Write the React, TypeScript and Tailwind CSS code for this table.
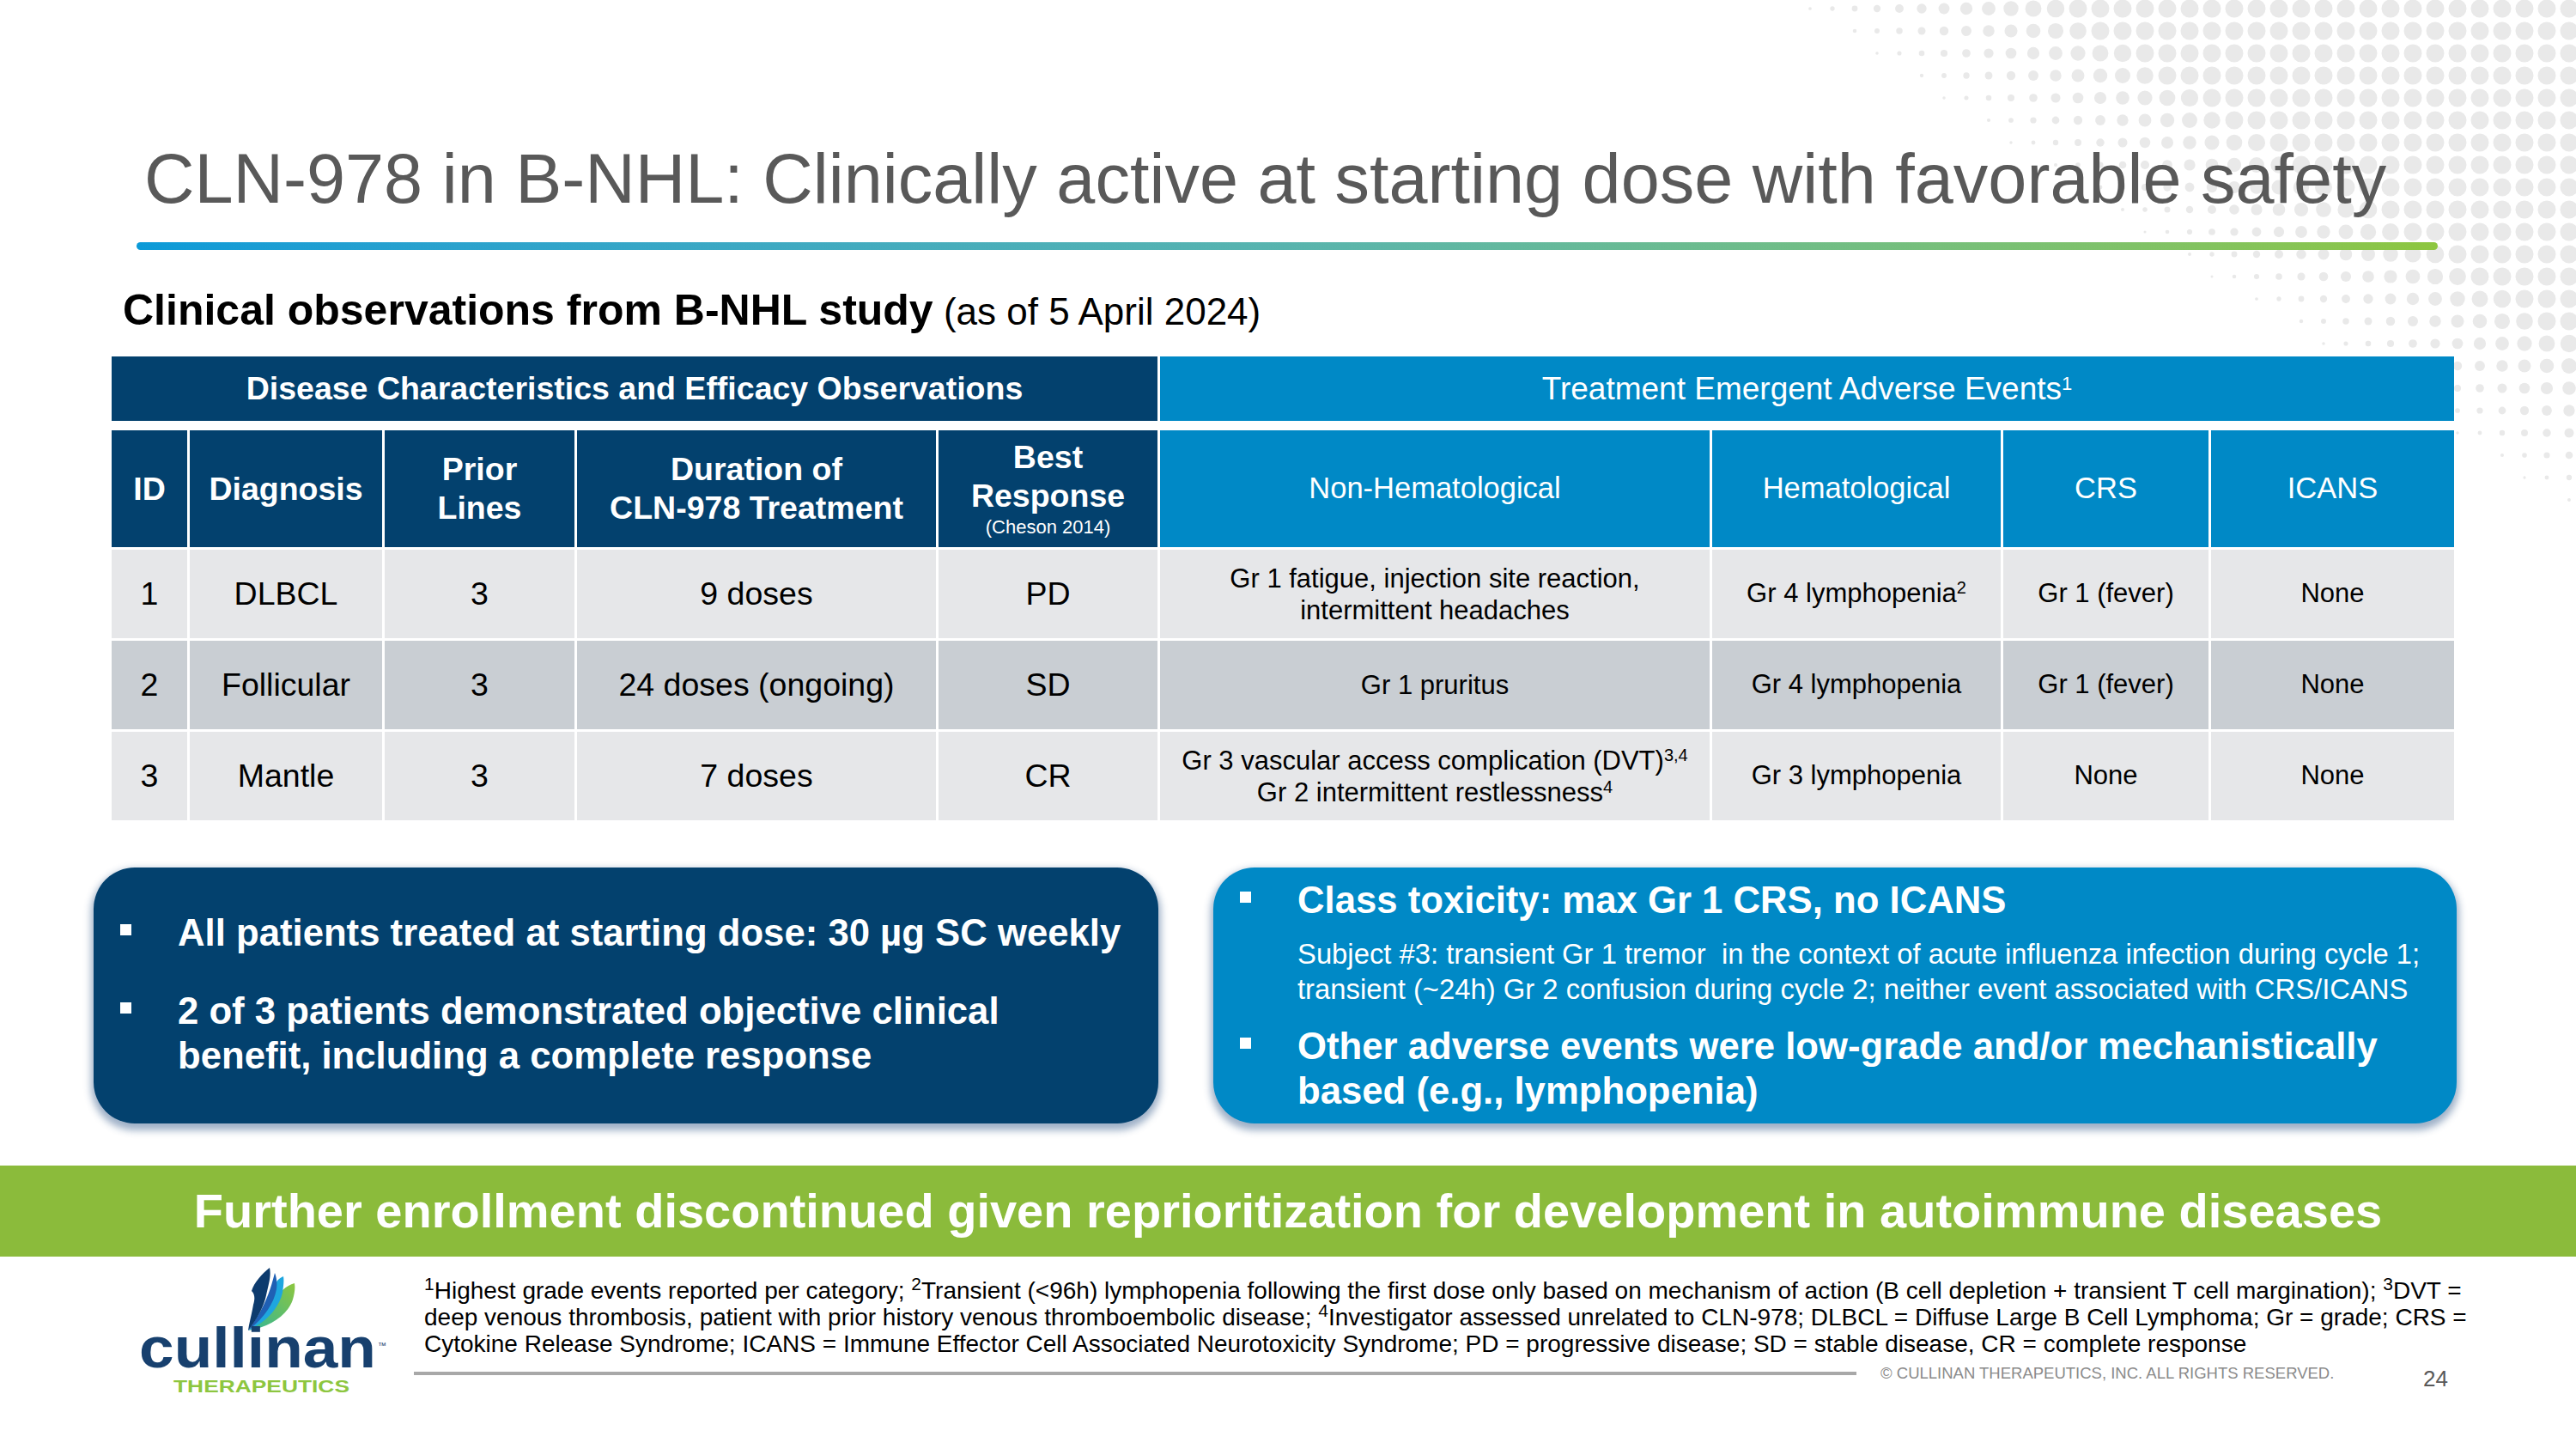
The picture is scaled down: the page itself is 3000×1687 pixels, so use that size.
import React from "react";

type Row = {
  id: string;
  diagnosis: string;
  lines: string;
  duration: string;
  response: string;
  nonHem: React.ReactNode;
  hem: React.ReactNode;
  crs: string;
  icans: string;
  bg: string;
};

const rows: Row[] = [
  {
    id: "1",
    diagnosis: "DLBCL",
    lines: "3",
    duration: "9 doses",
    response: "PD",
    nonHem: (
      <>
        Gr 1 fatigue, injection site reaction,
        <br />
        intermittent headaches
      </>
    ),
    hem: (
      <>
        Gr 4 lymphopenia<sup className="text-[20px]">2</sup>
      </>
    ),
    crs: "Gr 1 (fever)",
    icans: "None",
    bg: "bg-[#e6e7e9]",
  },
  {
    id: "2",
    diagnosis: "Follicular",
    lines: "3",
    duration: "24 doses (ongoing)",
    response: "SD",
    nonHem: "Gr 1 pruritus",
    hem: "Gr 4 lymphopenia",
    crs: "Gr 1 (fever)",
    icans: "None",
    bg: "bg-[#c9ced3]",
  },
  {
    id: "3",
    diagnosis: "Mantle",
    lines: "3",
    duration: "7 doses",
    response: "CR",
    nonHem: (
      <>
        Gr 3 vascular access complication (DVT)<sup className="text-[20px]">3,4</sup>
        <br />
        Gr 2 intermittent restlessness<sup className="text-[20px]">4</sup>
      </>
    ),
    hem: "Gr 3 lymphopenia",
    crs: "None",
    icans: "None",
    bg: "bg-[#e6e7e9]",
  },
];

// halftone dots in the top right corner
const DotPattern: React.FC = () => {
  const dots: { x: number; y: number; r: number }[] = [];
  for (let row = 0; row < 26; row++) {
    for (let col = 0; col < 40; col++) {
      const x = 2992 - col * 26;
      const y = 10 + row * 26;
      const t = 0.65 * (x - 2080) - y;
      if (t <= 0) continue;
      const r = Math.min(10.5, 1.5 + t * 0.045);
      dots.push({ x: x - 1900, y, r });
    }
  }
  return (
    <svg className="pointer-events-none absolute right-0 top-0" width={1100} height={700}>
      {dots.map((d, i) => (
        <circle key={i} cx={d.x} cy={d.y} r={d.r} fill="#e9e9e9" />
      ))}
    </svg>
  );
};

const Logo: React.FC = () => (
  <svg width={310} height={158} viewBox="0 0 310 158">
    <defs>
      <linearGradient id="leafGreen" x1="1" y1="0" x2="0" y2="1">
        <stop offset="0" stopColor="#8dc63f" />
        <stop offset="1" stopColor="#2fb59a" />
      </linearGradient>
    </defs>
    <g transform="translate(130 2)">
      <path d="M58 21 C48 24 40 31 36 41 C30 56 18 68 4 76 C30 72 50 58 56 40 C58 33 59 27 58 21 Z" fill="url(#leafGreen)" />
      <path d="M45 13 C38 16 34 22 33 30 C30 48 18 65 4 76 C25 66 40 50 44 32 C45 25 46 18 45 13 Z" fill="#1ea6df" />
      <path d="M35 9 C31 24 26 46 4 76 C22 62 34 45 37 28 C38 20 37 14 35 9 Z" fill="#1f5fb4" />
      <path d="M29 3 C20 10 11 20 8 30 C12 34 12 39 10 46 C8 58 5 68 4 76 C12 66 22 50 25 35 C28 22 31 12 29 3 Z" fill="#0d3b6e" />
    </g>
    <text x={7} y={121} fontFamily="'Liberation Sans', Arial, sans-serif" fontWeight={700} fontSize={66} fill="#17406e" textLength={276} lengthAdjust="spacingAndGlyphs">
      cullinan
    </text>
    <text x={285} y={99} fontFamily="'Liberation Sans', Arial, sans-serif" fontSize={10} fill="#17406e">
      ™
    </text>
    <text x={47} y={150} fontFamily="'Liberation Sans', Arial, sans-serif" fontWeight={700} fontSize={21} fill="#8dc63f" textLength={205} lengthAdjust="spacingAndGlyphs">
      THERAPEUTICS
    </text>
  </svg>
);

const grid = "grid grid-cols-[88px_224px_221px_418px_255px_640px_336px_239px_283px] gap-x-[3px]";
const cell = "flex items-center justify-center text-center";

const Bullet: React.FC<{ children: React.ReactNode; top: string }> = ({ children, top }) => (
  <div className="flex items-start">
    <span className={`ml-[31px] h-[13px] w-[13px] shrink-0 bg-white ${top}`} />
    <div className="ml-[54px] text-[43.7px] font-bold leading-[52px] text-white">{children}</div>
  </div>
);

export default function App() {
  return (
    <div className="relative h-[1687px] w-[3000px] overflow-hidden bg-white font-['Liberation_Sans',Arial,sans-serif]">
      <DotPattern />
      <div className="relative flex flex-col">
        <h1 className="ml-[168px] mt-[168px] whitespace-nowrap text-[81px] font-normal leading-none text-[#595959]">
          CLN-978 in B-NHL: Clinically active at starting dose with favorable safety
        </h1>
        <div className="ml-[159px] mt-[33px] h-[9px] w-[2680px] rounded-full bg-linear-to-r from-[#0a9ad8] via-[#58b4ae] to-[#8dc63f]" />

        <h2 className="ml-[143px] mt-[45px] whitespace-nowrap leading-none text-black">
          <span className="text-[50px] font-bold">Clinical observations from B-NHL study</span>
          <span className="text-[44px] font-normal"> (as of 5 April 2024)</span>
        </h2>

        {/* table */}
        <div className="ml-[130px] mt-[29px] flex w-[2728px] flex-col">
          <div className={`${grid} h-[75px]`}>
            <div className={`${cell} col-span-5 bg-[#03416e] text-[37.5px] font-bold text-white`}>
              Disease Characteristics and Efficacy Observations
            </div>
            <div className={`${cell} col-span-4 bg-[#0089c6] text-[37px] text-white`}>
              <span>
                Treatment Emergent Adverse Events<sup className="text-[22px]">1</sup>
              </span>
            </div>
          </div>
          <div className={`${grid} mt-[11px] h-[136px]`}>
            {["ID", "Diagnosis"].map((h) => (
              <div key={h} className={`${cell} bg-[#03416e] text-[37.5px] font-bold text-white`}>
                {h}
              </div>
            ))}
            <div className={`${cell} bg-[#03416e] text-[37.5px] font-bold leading-[45px] text-white`}>
              Prior
              <br />
              Lines
            </div>
            <div className={`${cell} bg-[#03416e] text-[37.5px] font-bold leading-[45px] text-white`}>
              Duration of
              <br />
              CLN-978 Treatment
            </div>
            <div className={`${cell} flex-col bg-[#03416e] text-white`}>
              <span className="text-[37.5px] font-bold leading-[45px]">Best</span>
              <span className="text-[37.5px] font-bold leading-[45px]">Response</span>
              <span className="text-[22px] leading-[28px]">(Cheson 2014)</span>
            </div>
            {["Non-Hematological", "Hematological", "CRS", "ICANS"].map((h) => (
              <div key={h} className={`${cell} bg-[#0089c6] text-[34.5px] text-white`}>
                {h}
              </div>
            ))}
          </div>
          {rows.map((r) => (
            <div key={r.id} className={`${grid} mt-[3px] h-[103px] text-black`}>
              <div className={`${cell} ${r.bg} text-[37.5px]`}>{r.id}</div>
              <div className={`${cell} ${r.bg} text-[37.5px]`}>{r.diagnosis}</div>
              <div className={`${cell} ${r.bg} text-[37.5px]`}>{r.lines}</div>
              <div className={`${cell} ${r.bg} text-[37.5px]`}>{r.duration}</div>
              <div className={`${cell} ${r.bg} text-[37.5px]`}>{r.response}</div>
              <div className={`${cell} ${r.bg} text-[31px] leading-[37px]`}>
                <span>{r.nonHem}</span>
              </div>
              <div className={`${cell} ${r.bg} text-[31px]`}>
                <span>{r.hem}</span>
              </div>
              <div className={`${cell} ${r.bg} text-[31px]`}>{r.crs}</div>
              <div className={`${cell} ${r.bg} text-[31px]`}>{r.icans}</div>
            </div>
          ))}
        </div>

        {/* summary boxes */}
        <div className="ml-[109px] mt-[55px] flex gap-[64px]">
          <div className="flex h-[298px] w-[1240px] flex-col justify-center gap-[39px] rounded-[48px] bg-[#03416e] pb-[4px] shadow-[0_5px_9px_3px_rgba(40,80,130,0.45)]">
            <Bullet top="mt-[16px]">All patients treated at starting dose: 30 µg SC weekly</Bullet>
            <Bullet top="mt-[16px]">
              2 of 3 patients demonstrated objective clinical
              <br />
              benefit, including a complete response
            </Bullet>
          </div>
          <div className="flex h-[298px] w-[1448px] flex-col rounded-[48px] bg-[#0089c6] pt-[12px] shadow-[0_5px_9px_3px_rgba(40,80,130,0.45)]">
            <Bullet top="mt-[16px]">Class toxicity: max Gr 1 CRS, no ICANS</Bullet>
            <p className="ml-[98px] mt-[16px] whitespace-pre text-[32.8px] leading-[41px] text-white">
              {"Subject #3: transient Gr 1 tremor  in the context of acute influenza infection during cycle 1;"}
              <br />
              {"transient (~24h) Gr 2 confusion during cycle 2; neither event associated with CRS/ICANS"}
            </p>
            <div className="mt-[20px]">
              <Bullet top="mt-[16px]">
                Other adverse events were low-grade and/or mechanistically
                <br />
                based (e.g., lymphopenia)
              </Bullet>
            </div>
          </div>
        </div>

        {/* banner */}
        <div className="mt-[49px] flex h-[106px] w-full items-center justify-center bg-[#8bbb3b]">
          <span className="whitespace-nowrap text-[56px] font-bold text-white">
            Further enrollment discontinued given reprioritization for development in autoimmune diseases
          </span>
        </div>

        {/* footer */}
        <div className="flex">
          <div className="ml-[155px] mt-[8px]">
            <Logo />
          </div>
          <div className="ml-[17px] mt-[24px] flex flex-col">
            <div className="whitespace-nowrap pl-[12px] text-[28px] leading-[31px] text-black">
              <sup>1</sup>Highest grade events reported per category; <sup>2</sup>Transient (&lt;96h) lymphopenia following the
              first dose only based on mechanism of action (B cell depletion + transient T cell margination); <sup>3</sup>DVT =
              <br />
              deep venous thrombosis, patient with prior history venous thromboembolic disease; <sup>4</sup>Investigator
              assessed unrelated to CLN-978; DLBCL = Diffuse Large B Cell Lymphoma; Gr = grade; CRS =
              <br />
              Cytokine Release Syndrome; ICANS = Immune Effector Cell Associated Neurotoxicity Syndrome; PD = progressive
              disease; SD = stable disease, CR = complete response
            </div>
            <div className="mt-[4px] flex h-[30px] items-center">
              <div className="h-[4px] w-[1680px] bg-[#a8a8a8]" />
              <span className="ml-[28px] w-[632px] whitespace-nowrap text-[18.5px] text-[#8a8a8a]">
                © CULLINAN THERAPEUTICS, INC. ALL RIGHTS RESERVED.
              </span>
              <span className="mt-[12px] text-[26px] text-[#595959]">24</span>
            </div>
          </div>
        </div>
      </div>
    </div>
  );
}
